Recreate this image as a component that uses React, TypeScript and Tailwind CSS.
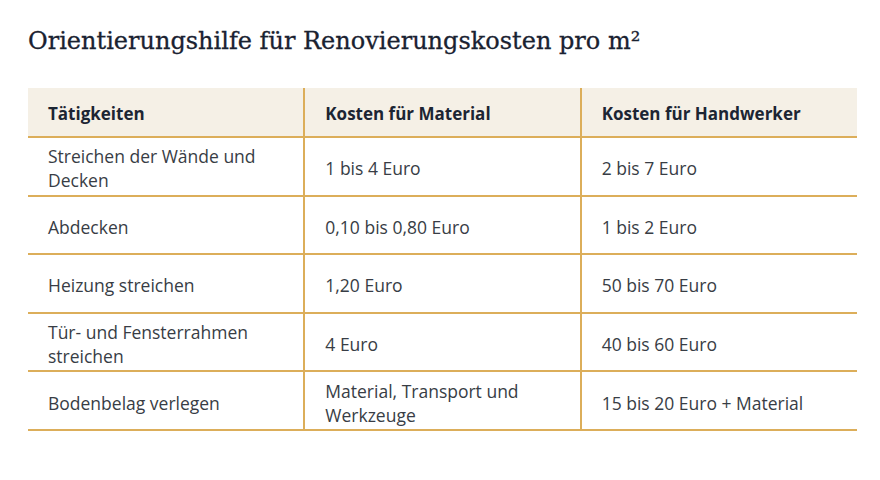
import React from 'react';

type Row = {
  task: string;
  material: string;
  craftsman: string;
};

const rows: Row[] = [
  { task: 'Streichen der Wände und Decken', material: '1 bis 4 Euro', craftsman: '2 bis 7 Euro' },
  { task: 'Abdecken', material: '0,10 bis 0,80 Euro', craftsman: '1 bis 2 Euro' },
  { task: 'Heizung streichen', material: '1,20 Euro', craftsman: '50 bis 70 Euro' },
  { task: 'Tür- und Fensterrahmen streichen', material: '4 Euro', craftsman: '40 bis 60 Euro' },
  { task: 'Bodenbelag verlegen', material: 'Material, Transport und Werkzeuge', craftsman: '15 bis 20 Euro + Material' },
];

const App = () => {
  return (
    <div className="w-[880px] h-[480px] bg-white px-[28px] pt-[24px] font-['Open_Sans',sans-serif]">
      {/* title */}
      <h1 className="font-['DejaVu_Serif',serif] text-[24px] leading-[34px] text-[#1a2231] [-webkit-text-stroke:0.3px_#1a2231]">
        Orientierungshilfe für Renovierungskosten pro m²
      </h1>
      {/* table */}
      <table className="mt-[30px] w-[829px] table-fixed border-collapse text-[17.5px] leading-[24px]">
        <thead>
          <tr className="h-[49px] bg-[#f5f0e6] border-b-2 border-[#dcae5a] text-[17px]">
            <th className="px-5 pt-1 text-left font-bold text-[#1c2533]">Tätigkeiten</th>
            <th className="px-5 pt-1 text-left font-bold text-[#1c2533] border-l-2 border-[#dcae5a]">
              Kosten für Material
            </th>
            <th className="px-5 pt-1 text-left font-bold text-[#1c2533] border-l-2 border-[#dcae5a]">
              Kosten für Handwerker
            </th>
          </tr>
        </thead>
        <tbody className="text-[#383d45]">
          {rows.map((row) => (
            <tr key={row.task} className="h-[58.6px] border-b-2 border-[#dcae5a]">
              <td className="px-5 pt-1 align-middle">{row.task}</td>
              <td className="px-5 pt-1 align-middle border-l-2 border-[#dcae5a]">{row.material}</td>
              <td className="px-5 pt-1 align-middle border-l-2 border-[#dcae5a]">{row.craftsman}</td>
            </tr>
          ))}
        </tbody>
      </table>
    </div>
  );
};

export default App;
